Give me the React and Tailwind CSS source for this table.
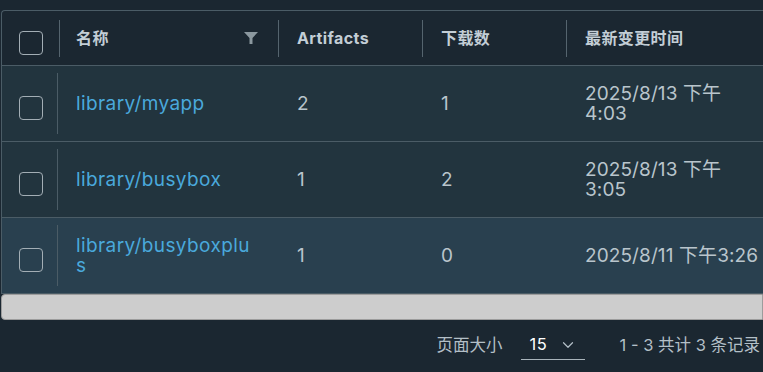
import { ChevronDown } from "lucide-react";

const rows = [
  { name: "library/myapp", artifacts: "2", pulls: "1", time: "2025/8/13 下午 4:03" },
  { name: "library/busybox", artifacts: "1", pulls: "2", time: "2025/8/13 下午 3:05" },
  { name: "library/busyboxplus", artifacts: "1", pulls: "0", time: "2025/8/11 下午3:26", active: true },
];

const Checkbox = () => (
  <div className="w-[24px] h-[24px] rounded-[4px] border border-[#a3aeb5] shrink-0" />
);

const HeadDivider = () => <div className="w-px shrink-0 bg-[#55646e] mt-[9px] mb-[8px]" />;

const Funnel = () => (
  <svg width="14" height="12" viewBox="0 0 14 12" className="shrink-0">
    <path d="M0 0H14L8.5 6V12H5.5V6Z" fill="#8b989f" />
  </svg>
);

export default function App() {
  return (
    <div
      className="w-[763px] h-[372px] bg-[#1b2731] overflow-hidden flex flex-col"
      style={{ fontFamily: '"Inter", "Noto Sans CJK SC", sans-serif' }}
    >
      <div className="pt-[10px] pl-[1px]">
        <div className="border-t border-l border-[#4b5c66] rounded-tl-[4px] overflow-hidden">
          <div className="w-[800px]">
            {/* header */}
            <div className="flex h-[55px] border-b border-[#4b5c66] text-[16px] tracking-[0.4px] font-bold text-[#c3ced6]">
              <div className="w-[57px] flex items-center pl-[17px] pt-[10px]">
                <Checkbox />
              </div>
              <HeadDivider />
              <div className="w-[218px] flex items-center justify-between pl-[16px] pr-[20px]">
                <span>名称</span>
                <Funnel />
              </div>
              <HeadDivider />
              <div className="w-[143px] flex items-center pl-[18px]">Artifacts</div>
              <HeadDivider />
              <div className="w-[143px] flex items-center pl-[18px]">下载数</div>
              <HeadDivider />
              <div className="flex-1 flex items-center pl-[18px]">最新变更时间</div>
            </div>

            {/* body */}
            {rows.map((r) => (
              <div
                key={r.name}
                className={
                  "flex h-[76px] border-b border-[#4b5c66] text-[19px] leading-[20px] tracking-[0.4px] text-[#b9c5cc] " +
                  (r.active ? "bg-[#29404f]" : "bg-[#22343e]")
                }
              >
                <div className="w-[55px] flex items-center pl-[17px] pt-[8px]">
                  <Checkbox />
                </div>
                <div className="w-px shrink-0 bg-[#4b5c66] my-[7px]" />
                <div className="w-[220px] flex items-center pl-[18px] pr-[22px]">
                  <span className="text-[#4aa9dc] break-all">{r.name}</span>
                </div>
                <div className="w-[144px] flex items-center pl-[19px]">{r.artifacts}</div>
                <div className="w-[144px] flex items-center pl-[19px]">{r.pulls}</div>
                <div className="w-[216px] flex items-center pl-[19px] pr-[22px] tracking-[0.1px]">
                  <span>{r.time}</span>
                </div>
              </div>
            ))}
          </div>
        </div>
      </div>

      {/* horizontal scrollbar */}
      <div className="h-[26px] ml-[1px] bg-[#cdcdcd] border border-[#9c9c9c] rounded-l-[4px]" />

      {/* footer */}
      <div className="flex-1 flex items-center justify-end pr-[3px] pb-[2px] text-[16.5px] text-[#b3bfc7]">
        <span>页面大小</span>
        <div className="ml-[18px] w-[64px] h-[30px] flex items-center justify-between pl-[9px] pr-[8px] border-b border-[#a9b4bb]">
          <span className="text-white tracking-[0.5px]">15</span>
          <ChevronDown size={18} strokeWidth={1.6} className="text-[#b3bfc7]" />
        </div>
        <span className="ml-[35px]">1 - 3 共计 3 条记录</span>
      </div>
    </div>
  );
}
